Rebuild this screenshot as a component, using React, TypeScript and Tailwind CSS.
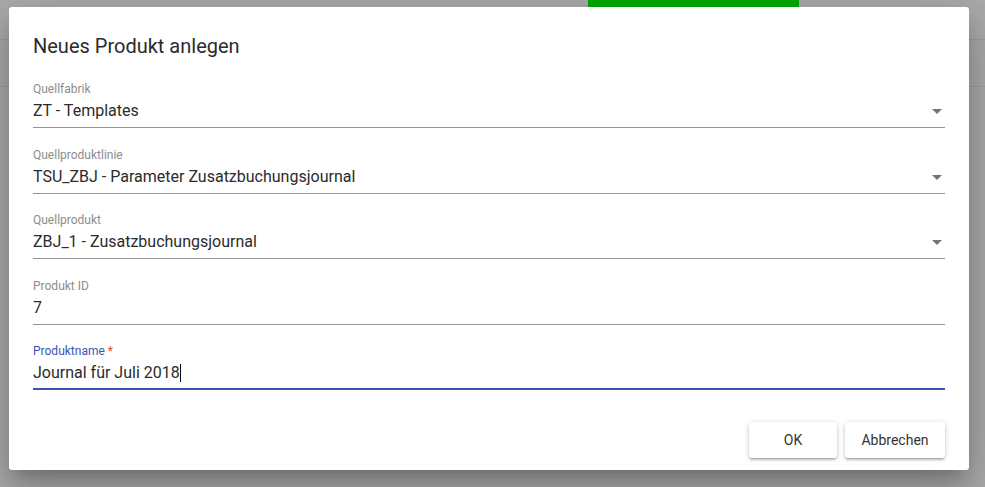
const fields = [
  { label: 'Quellfabrik', value: 'ZT - Templates', select: true },
  { label: 'Quellproduktlinie', value: 'TSU_ZBJ - Parameter Zusatzbuchungsjournal', select: true },
  { label: 'Quellprodukt', value: 'ZBJ_1 - Zusatzbuchungsjournal', select: true },
  { label: 'Produkt ID', value: '7', select: false },
]

function ArrowDropDown() {
  return (
    <svg width="10" height="5" viewBox="0 0 10 5" className="ml-auto mr-[3px] mt-[8px] shrink-0">
      <path d="M0 0l5 5 5-5z" fill="#757575" />
    </svg>
  )
}

function Field({ label, value, select }: { label: string; value: string; select: boolean }) {
  return (
    <div className="flex flex-col">
      <label className="text-[12px] leading-[14px] text-[#8c8c8c]">{label}</label>
      <div className="mt-[5px] flex items-start border-b border-[#949494] pb-[6px]">
        <span className="text-[16px] leading-[20px] text-[#2b2b2b]">{value}</span>
        {select && <ArrowDropDown />}
      </div>
    </div>
  )
}

export default function App() {
  return (
    <div
      className="relative w-[985px] h-[487px] overflow-hidden bg-[#ababab]"
      style={{ fontFamily: 'Roboto, "Liberation Sans", sans-serif' }}
    >
      {/* page behind the overlay */}
      <div className="flex flex-col">
        <div className="h-[40px] border-b border-[#9e9e9e]">
          <div className="ml-[588px] w-[211px] h-[7px] bg-[#00aa00]" />
        </div>
        <div className="h-[47px] border-b border-[#9e9e9e]" />
      </div>

      {/* dialog */}
      <div className="absolute left-[9px] top-[7px] w-[960px] h-[463px] bg-white rounded-[3px] flex flex-col shadow-[0px_11px_15px_-7px_rgba(0,0,0,0.2),0px_24px_38px_3px_rgba(0,0,0,0.14),0px_9px_46px_8px_rgba(0,0,0,0.12)]">
        <h2 className="px-6 pt-[23px] text-[20px] leading-[32px] text-[#2b2b2b]">Neues Produkt anlegen</h2>

        <div className="px-6 pt-[20px] flex flex-col gap-[19.5px]">
          {fields.map((f) => (
            <Field key={f.label} {...f} />
          ))}
          <div className="flex flex-col">
            <label className="text-[12px] leading-[14px] text-[#3f51b5]">
              Produktname <span className="text-[#f44336]">*</span>
            </label>
            <div className="mt-[5px] flex items-start border-b-2 border-[#3f51b5] pb-[5px]">
              <span className="text-[16px] leading-[20px] text-[#2b2b2b]">Journal für Juli 2018</span>
              <span className="inline-block w-px h-[18px] mt-[1px] bg-black" />
            </div>
          </div>
        </div>

        <div className="mt-auto mb-[12px] px-6 flex justify-end gap-2">
          <button className="w-[88px] h-[36px] rounded-[3px] bg-white text-[14px] text-[#333] shadow-[0px_1px_5px_0px_rgba(0,0,0,0.2),0px_2px_2px_0px_rgba(0,0,0,0.14),0px_3px_1px_-2px_rgba(0,0,0,0.12)]">
            OK
          </button>
          <button className="w-[100px] h-[36px] rounded-[3px] bg-white text-[14px] text-[#333] shadow-[0px_1px_5px_0px_rgba(0,0,0,0.2),0px_2px_2px_0px_rgba(0,0,0,0.14),0px_3px_1px_-2px_rgba(0,0,0,0.12)]">
            Abbrechen
          </button>
        </div>
      </div>
    </div>
  )
}
